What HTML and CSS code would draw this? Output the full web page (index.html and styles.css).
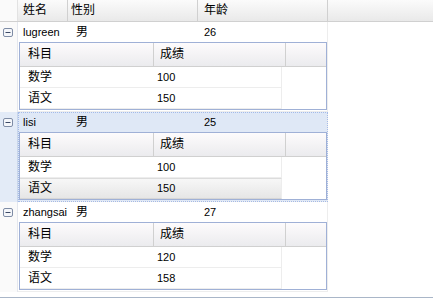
FILE: index.html
```html
<!DOCTYPE html>
<html lang="zh">
<head>
    <meta charset="UTF-8">
    <title>学生成绩</title>
    <link rel="stylesheet" href="styles.css">
</head>
<body>
    <div class="grid">
        <div class="grid-head">
            <div class="hd gutter"></div>
            <div class="hd col-name">姓名</div>
            <div class="hd col-sex">性别</div>
            <div class="hd col-age">年龄</div>
            <div class="hd col-rest"></div>
        </div>

        <div class="grid-body">
            <div class="row">
                <div class="gutter">
                    <svg class="toggle" width="10" height="9" viewBox="0 0 10 9"><rect x="0.5" y="0.5" width="9" height="8" rx="1.5" fill="#f4f6fa" stroke="#7f8da6"/><path d="M2.5 4.5h5" stroke="#3c4a66"/></svg>
                </div>
                <div class="row-main">
                    <div class="row-line">
                        <div class="cell col-name">lugreen</div>
                        <div class="cell col-sex">男</div>
                        <div class="cell col-age">26</div>
                    </div>
                    <div class="sub">
                        <div class="sub-head">
                            <div class="sh col-subject">科目</div>
                            <div class="sh col-score">成绩</div>
                            <div class="sh col-rest"></div>
                        </div>
                        <div class="sub-row">
                            <div class="sc col-subject">数学</div>
                            <div class="sc col-score">100</div>
                        </div>
                        <div class="sub-row">
                            <div class="sc col-subject">语文</div>
                            <div class="sc col-score">150</div>
                        </div>
                    </div>
                </div>
            </div>

            <div class="row selected">
                <div class="gutter">
                    <svg class="toggle" width="10" height="9" viewBox="0 0 10 9"><rect x="0.5" y="0.5" width="9" height="8" rx="1.5" fill="#f4f6fa" stroke="#7f8da6"/><path d="M2.5 4.5h5" stroke="#3c4a66"/></svg>
                </div>
                <div class="row-main">
                    <div class="row-line">
                        <div class="cell col-name">lisi</div>
                        <div class="cell col-sex">男</div>
                        <div class="cell col-age">25</div>
                    </div>
                    <div class="sub">
                        <div class="sub-head">
                            <div class="sh col-subject">科目</div>
                            <div class="sh col-score">成绩</div>
                            <div class="sh col-rest"></div>
                        </div>
                        <div class="sub-row">
                            <div class="sc col-subject">数学</div>
                            <div class="sc col-score">100</div>
                        </div>
                        <div class="sub-row active">
                            <div class="sc col-subject">语文</div>
                            <div class="sc col-score">150</div>
                        </div>
                    </div>
                </div>
            </div>

            <div class="row">
                <div class="gutter">
                    <svg class="toggle" width="10" height="9" viewBox="0 0 10 9"><rect x="0.5" y="0.5" width="9" height="8" rx="1.5" fill="#f4f6fa" stroke="#7f8da6"/><path d="M2.5 4.5h5" stroke="#3c4a66"/></svg>
                </div>
                <div class="row-main">
                    <div class="row-line">
                        <div class="cell col-name">zhangsai</div>
                        <div class="cell col-sex">男</div>
                        <div class="cell col-age">27</div>
                    </div>
                    <div class="sub">
                        <div class="sub-head">
                            <div class="sh col-subject">科目</div>
                            <div class="sh col-score">成绩</div>
                            <div class="sh col-rest"></div>
                        </div>
                        <div class="sub-row">
                            <div class="sc col-subject">数学</div>
                            <div class="sc col-score">120</div>
                        </div>
                        <div class="sub-row">
                            <div class="sc col-subject">语文</div>
                            <div class="sc col-score">158</div>
                        </div>
                    </div>
                </div>
            </div>
        </div>
    </div>
</body>
</html>
```

FILE: styles.css
```css
* {
    box-sizing: border-box;
}
body {
    margin: 0;
    padding: 0;
    background: #fff;
    font-family: "Liberation Sans", "Noto Sans CJK SC", sans-serif;
    font-size: 12px;
    color: #000;
}
.grid {
    width: 433px;
    height: 298px;
    display: flex;
    flex-direction: column;
    border-bottom: 1px solid #a9b6c8;
}
.grid-head {
    display: flex;
    height: 22px;
    border-bottom: 1px solid #d0d0d0;
    background: linear-gradient(#fbfbfb, #e9e9e9);
}
.hd {
    height: 21px;
    line-height: 21px;
    border-right: 1px solid #d0d0d0;
    white-space: nowrap;
}
.hd.gutter {
    width: 18px;
    border-right-color: #e2e2e2;
}
.hd.col-name {
    width: 50px;
    padding-left: 5px;
}
.hd.col-sex {
    width: 130px;
    padding-left: 3px;
}
.hd.col-age {
    width: 130px;
    padding-left: 6px;
}
.hd.col-rest {
    flex: 1;
    border-right: none;
}
.grid-body {
    flex: 1;
}
.row {
    display: flex;
}
.gutter {
    width: 18px;
    background: #fafafa;
    border-right: 1px solid #e4e7ee;
}
.toggle {
    display: block;
    margin: 6px 0 0 3px;
}
.row-main {
    width: 310px;
    border-right: 1px solid #ededed;
    border-bottom: 1px solid #ededed;
    padding-bottom: 1px;
}
.row.selected .gutter {
    background: #e3ebf7;
    border-right-color: #c9d6ea;
}
.row.selected .row-main {
    background: #dfe8f6;
    outline: 1px dotted #a3bae9;
    outline-offset: -1px;
}
.row-line {
    display: flex;
    height: 20px;
    line-height: 21px;
}
.cell {
    white-space: nowrap;
}
.cell.col-name {
    width: 54px;
    padding-left: 5px;
    font-size: 11px;
}
.cell.col-sex {
    width: 130px;
    padding-left: 4px;
}
.cell.col-age {
    padding-left: 2px;
    font-size: 11px;
}
.sub {
    width: 308px;
    height: 68px;
    margin-left: 1px;
    border: 1px solid #9fb0d6;
    background: #fff;
}
.sub-head {
    display: flex;
    height: 24px;
    border-bottom: 1px solid #d0d0d0;
    background: linear-gradient(#fdfbfc, #ebebee);
}
.sh {
    height: 23px;
    line-height: 23px;
    border-right: 1px solid #d0d0d0;
}
.sh.col-subject {
    width: 134px;
    padding-left: 8px;
}
.sh.col-score {
    width: 132px;
    padding-left: 6px;
}
.sh.col-rest {
    flex: 1;
    border-right: none;
}
.sub-row {
    display: flex;
    width: 262px;
    height: 21px;
    line-height: 20px;
    border-bottom: 1px solid #ededed;
    border-right: 1px solid #ededed;
}
.sub-row.active {
    background: linear-gradient(#f7f7f7, #e6e6e6);
    border-top: 1px solid #dcdcdc;
    border-bottom-color: #d6d6d6;
    line-height: 19px;
    height: 21px;
}
.sc.col-subject {
    width: 130px;
    padding-left: 8px;
}
.sc.col-score {
    padding-left: 7px;
    font-size: 11px;
}
```
